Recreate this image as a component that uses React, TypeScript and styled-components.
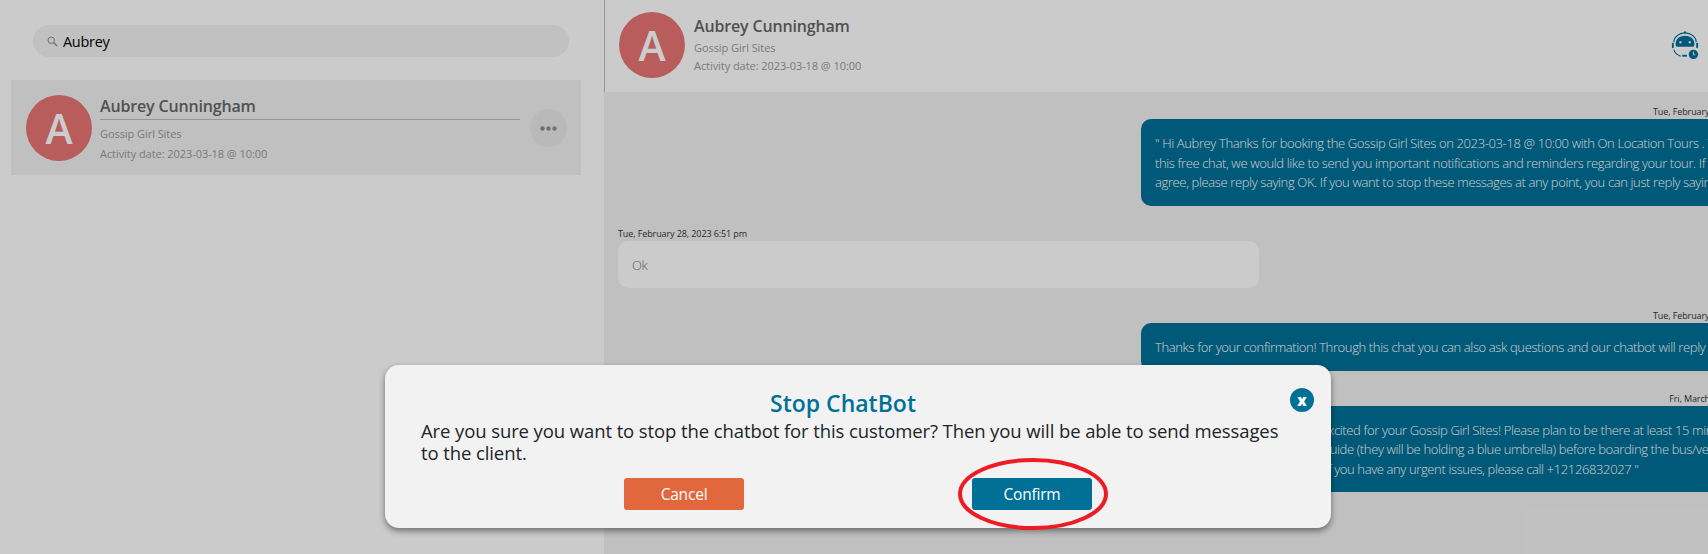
import React from "react";
import styled, { createGlobalStyle } from "styled-components";

const GlobalStyle = createGlobalStyle`
  html, body { margin: 0; padding: 0; height: 100%; overflow: hidden; }
  body { font-family: "Open Sans", "Noto Sans", sans-serif; }
  #root { height: 100%; }
`;

const Page = styled.div`
  position: relative;
  display: flex;
  width: 1708px;
  height: 554px;
  overflow: hidden;
  background: #fefefe;
`;

const Sidebar = styled.aside`
  flex: 0 0 604px;
  padding: 25px 23px 0 11px;
  box-sizing: border-box;
`;

const SearchBox = styled.div`
  display: flex;
  align-items: center;
  gap: 5px;
  height: 32px;
  margin: 0 12px 23px 22px;
  padding: 0 14px;
  border-radius: 16px;
  background: #f2f2f2;
  color: #000;
  font-size: 14.5px;
  letter-spacing: -0.3px;
`;

const ContactRow = styled.div`
  display: flex;
  align-items: center;
  height: 95px;
  padding: 0 14px 0 15px;
  background: #f0f0f0;
`;

const Avatar = styled.div`
  flex: none;
  display: flex;
  align-items: center;
  justify-content: center;
  width: 66px;
  height: 66px;
  border-radius: 50%;
  background: #e67373;
  color: #fff;
  font-size: 41px;
  font-weight: 600;
`;

const ContactInfo = styled.div`
  flex: 1;
  margin: 1px 10px 0 8px;
`;

const ContactName = styled.div`
  padding-bottom: 2px;
  border-bottom: 1px solid #bbb;
  color: #666;
  font-size: 16px;
  font-weight: 600;
  letter-spacing: -0.16px;
  line-height: 22px;
`;

const SubLine = styled.div`
  margin-top: 7px;
  color: #999;
  font-size: 11px;
  letter-spacing: -0.06px;
  line-height: 13px;
`;

const DateLine = styled(SubLine)`
  margin-top: 6px;
  line-height: 15px;
`;

const MoreButton = styled.div`
  flex: none;
  display: flex;
  align-items: center;
  justify-content: center;
  width: 37px;
  height: 38px;
  margin-top: 1px;
  border-radius: 50%;
  background: #e8e8e8;
`;

const Main = styled.main`
  flex: 0 0 1180px;
  display: flex;
  flex-direction: column;
`;

const ChatHeader = styled.header`
  display: flex;
  align-items: center;
  height: 92px;
  padding: 0 85px 3px 14px;
  box-sizing: border-box;
  border-left: 1px solid #bdbdbd;
`;

const HeaderInfo = styled.div`
  flex: 1;
  margin-left: 9px;
  padding-bottom: 2px;
`;

const HeaderName = styled.div`
  color: #666;
  font-size: 16px;
  font-weight: 600;
  letter-spacing: -0.16px;
  line-height: 22px;
`;

const HeaderSub = styled(SubLine)`
  margin-top: 4px;
`;

const HeaderDate = styled(SubLine)`
  margin-top: 4px;
  line-height: 15px;
`;

const Messages = styled.section`
  flex: 1;
  padding: 13px 0 0 14px;
  background: #f1f1f1;
`;

const Stamp = styled.div<{ $out?: boolean }>`
  height: 14px;
  color: #333;
  font-size: 9px;
  letter-spacing: -0.1px;
  line-height: 14px;
  text-align: ${(p) => (p.$out ? "right" : "left")};
  padding-right: ${(p) => (p.$out ? "2px" : "0")};
`;

const Bubble = styled.div<{ $out?: boolean }>`
  box-sizing: border-box;
  width: 641px;
  margin: 0 0 21px ${(p) => (p.$out ? "523px" : "0")};
  padding: 15px 14px 13px;
  border-radius: 10px;
  overflow: hidden;
  background: ${(p) => (p.$out ? "#007096" : "#fefefe")};
  color: ${(p) => (p.$out ? "#fff" : "#777")};
  font-size: 13px;
  font-weight: 300;
  letter-spacing: -0.37px;
  line-height: 19.5px;
  white-space: nowrap;
`;

const Overlay = styled.div`
  position: absolute;
  inset: 0;
  background: rgba(0, 0, 0, 0.2);
`;

const Modal = styled.div`
  position: absolute;
  left: 385px;
  top: 365px;
  box-sizing: border-box;
  width: 946px;
  height: 163px;
  padding: 24px 36px 0;
  border-radius: 14px;
  background: #f2f2f2;
  box-shadow: 0 3px 6px rgba(0, 0, 0, 0.45);
`;

const CloseButton = styled.div`
  position: absolute;
  right: 17px;
  top: 23px;
  display: flex;
  align-items: center;
  justify-content: center;
  width: 24px;
  height: 24px;
  border-radius: 50%;
  background: #007096;
  color: #fff;
  font-size: 15px;
  font-weight: 800;
  line-height: 1;
`;

const Title = styled.h2`
  margin: 0;
  padding-right: 30px;
  color: #007096;
  font-size: 23px;
  font-weight: 600;
  line-height: 28px;
  text-align: center;
`;

const Body = styled.p`
  margin: 3px 0 14px;
  color: #212529;
  font-size: 18.5px;
  letter-spacing: -0.1px;
  line-height: 22px;
`;

const Actions = styled.div`
  display: grid;
  grid-template-columns: 120px 120px;
  justify-content: center;
  column-gap: 228px;
`;

const ActionButton = styled.div<{ $primary?: boolean }>`
  position: relative;
  display: flex;
  align-items: center;
  justify-content: center;
  height: 32px;
  border-radius: 3px;
  background: ${(p) => (p.$primary ? "#007096" : "#e0683c")};
  color: #fff;
  font-size: 15.5px;
  letter-spacing: -0.2px;
`;

const Circle = styled.svg`
  position: absolute;
  left: -15px;
  top: -21px;
  width: 152px;
  height: 74px;
`;

const SearchIcon = () => (
  <svg width="11" height="11" viewBox="0 0 11 11" fill="none" stroke="#8a8a8a" strokeWidth="1">
    <circle cx="4.2" cy="4.2" r="3.2" />
    <path d="M6.6 6.6 L10 10" strokeWidth="1.4" />
  </svg>
);

const Dots = () => (
  <svg width="17" height="5" viewBox="0 0 17 5" fill="#8f8f8f">
    <circle cx="2.5" cy="2.5" r="2.2" />
    <circle cx="8.5" cy="2.5" r="2.2" />
    <circle cx="14.5" cy="2.5" r="2.2" />
  </svg>
);

const BotIcon = () => (
  <svg width="28" height="28" viewBox="0 0 30 30" fill="none">
    <circle cx="15" cy="1.6" r="1.2" fill="#007096" />
    <path d="M3 12 A12 10 0 0 1 27 12" stroke="#007096" strokeWidth="1.2" />
    <path d="M5 13 A10 8 0 0 1 25 13 V15 Q25 17 23 17 H7 Q5 17 5 15 Z" fill="#007096" />
    <rect x="9" y="11" width="2.2" height="2.2" fill="#fefefe" />
    <rect x="19" y="11" width="2.2" height="2.2" fill="#fefefe" />
    <rect x="1" y="12.5" width="2" height="6" rx="1" fill="#007096" />
    <rect x="27" y="12.5" width="2" height="6" rx="1" fill="#007096" />
    <path d="M3 20 A12 10 0 0 0 10.5 27" stroke="#007096" strokeWidth="1.2" />
    <rect x="12" y="25.5" width="5" height="2" fill="#007096" />
    <circle cx="24" cy="25" r="5" fill="#007096" />
    <path d="M24 22 V25.5 H26" stroke="#fefefe" strokeWidth="1" />
  </svg>
);

export default function App() {
  return (
    <Page>
      <GlobalStyle />
      <Sidebar>
        <SearchBox>
          <SearchIcon />
          Aubrey
        </SearchBox>
        <ContactRow>
          <Avatar>A</Avatar>
          <ContactInfo>
            <ContactName>Aubrey Cunningham</ContactName>
            <SubLine>Gossip Girl Sites</SubLine>
            <DateLine>Activity date: 2023-03-18 @ 10:00</DateLine>
          </ContactInfo>
          <MoreButton>
            <Dots />
          </MoreButton>
        </ContactRow>
      </Sidebar>
      <Main>
        <ChatHeader>
          <Avatar>A</Avatar>
          <HeaderInfo>
            <HeaderName>Aubrey Cunningham</HeaderName>
            <HeaderSub>Gossip Girl Sites</HeaderSub>
            <HeaderDate>Activity date: 2023-03-18 @ 10:00</HeaderDate>
          </HeaderInfo>
          <BotIcon />
        </ChatHeader>
        <Messages>
          <Stamp $out>Tue, February 28, 2023 6:50 pm</Stamp>
          <Bubble $out>
            " Hi Aubrey Thanks for booking the Gossip Girl Sites on 2023-03-18 @ 10:00 with On Location Tours . Through
            <br />
            this free chat, we would like to send you important notifications and reminders regarding your tour. If you
            <br />
            agree, please reply saying OK. If you want to stop these messages at any point, you can just reply saying STOP. "
          </Bubble>
          <Stamp>Tue, February 28, 2023 6:51 pm</Stamp>
          <Bubble>Ok</Bubble>
          <Stamp $out>Tue, February 28, 2023 6:51 pm</Stamp>
          <Bubble $out>
            Thanks for your confirmation! Through this chat you can also ask questions and our chatbot will reply to you.
          </Bubble>
          <Stamp $out>Fri, March 17, 2023 9:00 am</Stamp>
          <Bubble $out>
            " Hi Aubrey! We are really very excited for your Gossip Girl Sites! Please plan to be there at least 15 minutes early
            <br />
            then please check in with your guide (they will be holding a blue umbrella) before boarding the bus/vehicle.
            <br />
            We shall see you all tomorrow! If you have any urgent issues, please call +12126832027 "
          </Bubble>
        </Messages>
      </Main>
      <Overlay />
      <Modal>
        <CloseButton>x</CloseButton>
        <Title>Stop ChatBot</Title>
        <Body>
          Are you sure you want to stop the chatbot for this customer? Then you will be able to send messages to the
          client.
        </Body>
        <Actions>
          <ActionButton>Cancel</ActionButton>
          <ActionButton $primary>
            Confirm
            <Circle viewBox="0 0 152 74" fill="none">
              <ellipse cx="76" cy="37" rx="73" ry="34" stroke="#ed1c24" strokeWidth="4" />
            </Circle>
          </ActionButton>
        </Actions>
      </Modal>
    </Page>
  );
}
